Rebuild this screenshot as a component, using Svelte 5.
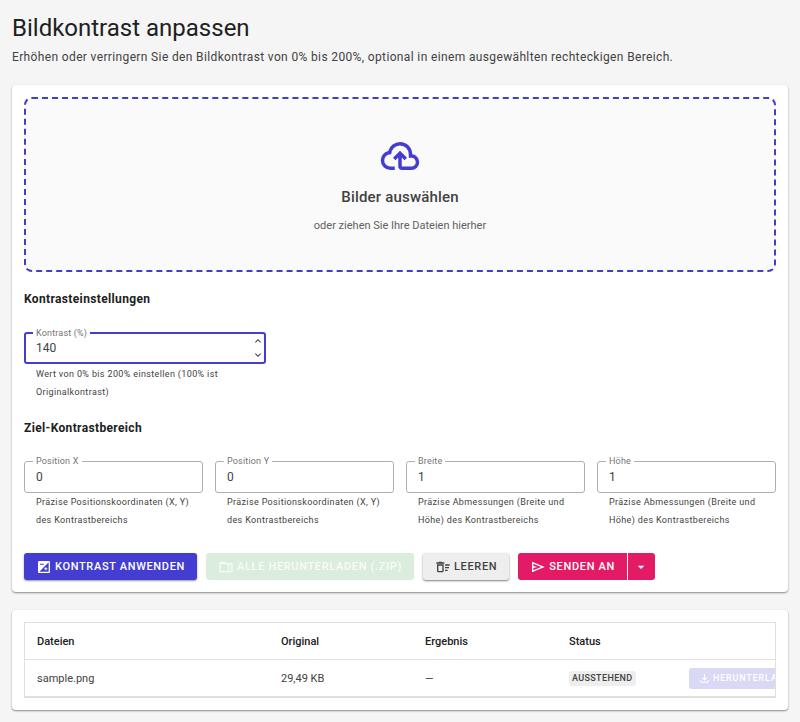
<script lang="ts">
  let contrast = $state(140);

  let area = $state([
    { id: 'pos-x', label: 'Position X', value: 0, hint: 'Präzise Positionskoordinaten (X, Y) des Kontrastbereichs' },
    { id: 'pos-y', label: 'Position Y', value: 0, hint: 'Präzise Positionskoordinaten (X, Y) des Kontrastbereichs' },
    { id: 'width', label: 'Breite', value: 1, hint: 'Präzise Abmessungen (Breite und Höhe) des Kontrastbereichs' },
    { id: 'height', label: 'Höhe', value: 1, hint: 'Präzise Abmessungen (Breite und Höhe) des Kontrastbereichs' }
  ]);

  let files = $state([
    { name: 'sample.png', size: '29,49 KB', result: '—', status: 'Ausstehend' }
  ]);

  const icons = {
    cloud: 'M6.5 20Q4.22 20 2.61 18.43 1 16.85 1 14.58 1 12.63 2.17 11.1 3.35 9.57 5.25 9.15 5.88 6.85 7.75 5.43 9.63 4 12 4 14.93 4 16.96 6.04 19 8.07 19 11 20.73 11.2 21.86 12.5 23 13.78 23 15.5 23 17.38 21.69 18.69 20.38 20 18.5 20H13Q12.18 20 11.59 19.41 11 18.83 11 18V12.85L9.4 14.4L8 13L12 9L16 13L14.6 14.4L13 12.85V18H18.5Q19.55 18 20.27 17.27 21 16.55 21 15.5 21 14.45 20.27 13.73 19.55 13 18.5 13H17V11Q17 8.93 15.54 7.46 14.08 6 12 6 9.93 6 8.46 7.46 7 8.93 7 11H6.5Q5.05 11 4.03 12.03 3 13.05 3 14.5 3 15.95 4.03 17 5.05 18 6.5 18H9V20Z',
    contrast: 'M17 15.5H15.5V17H14V15.5H12.5V14H14V12.5H15.5V14H17V15.5ZM19 19H5L19 5V19ZM6 7H11.5V8.5H6V7ZM19 3H5A2 2 0 0 0 3 5V19A2 2 0 0 0 5 21H19A2 2 0 0 0 21 19V5A2 2 0 0 0 19 3Z',
    zip: 'M20 6H12L10 4H4A2 2 0 0 0 2 6V18A2 2 0 0 0 4 20H20A2 2 0 0 0 22 18V8A2 2 0 0 0 20 6M20 18H16V16H14V18H4V8H14V10H16V8H20V18M16 12V10H18V12H16M14 12H16V14H14V12M18 16H16V14H18V16Z',
    clear: 'M15 16H19V18H15V16M15 8H22V10H15V8M15 12H21V14H15V12M11 10V18H5V10H11M13 8H3V18A2 2 0 0 0 5 20H11A2 2 0 0 0 13 18V8M14 5H11L10 4H6L5 5H2V7H14V5Z',
    send: 'M3 20V4L22 12M5 17L16.85 12L5 7V10.5L11 12L5 13.5Z',
    caret: 'M7 10L12 15L17 10H7Z',
    up: 'M7.41 15.41L12 10.83L16.59 15.41L18 14L12 8L6 14L7.41 15.41Z',
    down: 'M7.41 8.58L12 13.17L16.59 8.58L18 10L12 16L6 10L7.41 8.58Z',
    download: 'M18 15V18H6V15H4V18C4 19.1 4.9 20 6 20H18C19.1 20 20 19.1 20 18V15H18ZM17 11L15.59 9.59L13 12.17V4H11V12.17L8.41 9.59L7 11L12 16L17 11Z'
  };
</script>

{#snippet icon(name: keyof typeof icons)}
  <svg class="icon" viewBox="0 0 24 24" aria-hidden="true"><path fill-rule="evenodd" d={icons[name]} /></svg>
{/snippet}

<main>
  <h1>Bildkontrast anpassen</h1>
  <p class="intro">
    Erhöhen oder verringern Sie den Bildkontrast von 0% bis 200%, optional in einem ausgewählten rechteckigen Bereich.
  </p>

  <section class="card">
    <button class="dropzone">
      {@render icon('cloud')}
      <span class="pick">Bilder auswählen</span>
      <span class="drag">oder ziehen Sie Ihre Dateien hierher</span>
    </button>

    <h2>Kontrasteinstellungen</h2>
    <div class="settings">
      <div class="field active">
        <div class="outline">
          <label for="contrast">Kontrast (%)</label>
          <input id="contrast" type="number" min="0" max="200" bind:value={contrast} aria-describedby="contrast-hint" />
          <div class="spin">
            <button aria-label="Erhöhen" onclick={() => (contrast = Math.min(200, contrast + 1))}>{@render icon('up')}</button>
            <button aria-label="Verringern" onclick={() => (contrast = Math.max(0, contrast - 1))}>{@render icon('down')}</button>
          </div>
        </div>
        <p class="hint" id="contrast-hint">Wert von 0% bis 200% einstellen (100% ist Originalkontrast)</p>
      </div>
    </div>

    <h2>Ziel-Kontrastbereich</h2>
    <div class="area">
      {#each area as f (f.id)}
        <div class="field">
          <div class="outline">
            <label for={f.id}>{f.label}</label>
            <input id={f.id} type="number" bind:value={f.value} aria-describedby="{f.id}-hint" />
          </div>
          <p class="hint" id="{f.id}-hint">{f.hint}</p>
        </div>
      {/each}
    </div>

    <div class="actions">
      <button class="btn primary">{@render icon('contrast')}Kontrast anwenden</button>
      <button class="btn success" disabled>{@render icon('zip')}Alle herunterladen (.zip)</button>
      <button class="btn neutral" onclick={() => (files = [])}>{@render icon('clear')}Leeren</button>
      <div class="split">
        <button class="btn pink">{@render icon('send')}Senden an</button>
        <button class="btn pink more" aria-label="Weitere Ziele">{@render icon('caret')}</button>
      </div>
    </div>
  </section>

  <section class="card list">
    <div class="table-wrap">
      <table>
        <thead>
          <tr>
            <th class="name">Dateien</th>
            <th class="size">Original</th>
            <th class="size">Ergebnis</th>
            <th class="status">Status</th>
            <th></th>
          </tr>
        </thead>
        <tbody>
          {#each files as file}
            <tr>
              <td>{file.name}</td>
              <td>{file.size}</td>
              <td>{file.result}</td>
              <td><span class="chip">{file.status}</span></td>
              <td><button class="btn small" disabled>{@render icon('download')}Herunterladen</button></td>
            </tr>
          {/each}
        </tbody>
      </table>
    </div>
  </section>
</main>

<style>
  :global(body) {
    background: #f5f5f5;
  }

  main {
    padding: 12px;
    font-family: Roboto, 'Liberation Sans', sans-serif;
    color: #424242;
  }

  h1, h2, p {
    margin: 0;
  }

  h1 {
    font-size: 24px;
    font-weight: 400;
    line-height: 32px;
    color: #212121;
  }

  .intro {
    margin-top: 4px;
    font-size: 12px;
    line-height: 18px;
    letter-spacing: 0.03em;
  }

  .card {
    margin-top: 19px;
    padding: 12px;
    background: #fff;
    border-radius: 4px;
    box-shadow: 0 1px 2px rgba(0, 0, 0, 0.45);
  }

  .list {
    margin-top: 18px;
  }

  button, input {
    font-family: inherit;
    color: inherit;
  }

  button {
    cursor: pointer;
  }

  button:disabled {
    cursor: default;
  }

  .icon {
    display: block;
    flex: none;
    fill: currentColor;
  }

  .dropzone {
    display: flex;
    flex-direction: column;
    align-items: center;
    width: 100%;
    padding: 36px 12px 34px;
    border: 2px dashed #433dcb;
    border-radius: 8px;
    background: #fafafa;
  }

  .dropzone .icon {
    width: 42px;
    height: 42px;
    color: #433dd1;
  }

  .pick {
    margin-top: 8px;
    font-size: 15px;
    font-weight: 500;
    line-height: 24px;
    letter-spacing: 0.0125em;
  }

  .drag {
    margin-top: 7px;
    font-size: 11px;
    line-height: 20px;
    color: #616161;
  }

  h2 {
    margin-top: 18px;
    font-size: 12px;
    font-weight: 700;
    line-height: 18px;
    color: #212121;
    letter-spacing: 0.03em;
  }

  .area, .settings {
    display: grid;
    grid-template-columns: repeat(4, minmax(0, 1fr));
    gap: 12px;
    margin-top: 24px;
  }

  .settings {
    grid-template-columns: repeat(3, minmax(0, 1fr));
    gap: 13px;
  }

  .outline {
    position: relative;
    display: flex;
    box-sizing: border-box;
    height: 32px;
    border: 1px solid #b0b0b0;
    border-radius: 3px;
  }

  .active .outline {
    border: 2px solid #433dd1;
  }

  .outline label {
    position: absolute;
    top: -7px;
    left: 8px;
    padding: 0 3px;
    background: #fff;
    font-size: 9px;
    line-height: 12px;
    letter-spacing: 0.02em;
    color: #757575;
  }

  .active label {
    left: 7px;
  }

  .outline input {
    flex: 1;
    min-width: 0;
    padding: 0 11px;
    border: 0;
    outline: 0;
    background: none;
    font-size: 12px;
    appearance: textfield;
  }

  .active input {
    padding: 0 10px;
  }

  .outline input::-webkit-inner-spin-button {
    display: none;
  }

  .spin {
    display: flex;
    flex-direction: column;
    justify-content: space-around;
  }

  .spin button {
    padding: 0;
    border: 0;
    background: none;
  }

  .spin .icon {
    width: 12px;
    height: 12px;
  }

  .hint {
    padding: 0 12px;
    font-size: 9px;
    line-height: 18px;
    letter-spacing: 0.04em;
  }

  .active .hint {
    padding-top: 1px;
  }

  .actions {
    display: flex;
    flex-wrap: wrap;
    gap: 9px;
    margin-top: 24px;
  }

  .btn {
    display: flex;
    align-items: center;
    justify-content: center;
    gap: 3px;
    height: 27px;
    padding: 0 12px;
    border: 0;
    border-radius: 3px;
    font-size: 11px;
    font-weight: 500;
    letter-spacing: 0.06em;
    text-transform: uppercase;
    white-space: nowrap;
    color: #fff;
  }

  .btn .icon {
    width: 16px;
    height: 16px;
  }

  .primary {
    background: #433dd1;
    box-shadow: 0 1px 2px rgba(0, 0, 0, 0.4);
  }

  .success {
    background: #dbeddc;
    color: #f8fcf8;
  }

  .neutral {
    background: #eee;
    color: #424242;
    box-shadow: 0 1px 2px rgba(0, 0, 0, 0.5);
  }

  .split {
    display: flex;
    gap: 1px;
  }

  .pink {
    background: #e31b67;
    border-radius: 3px 0 0 3px;
  }

  .more {
    width: 27px;
    padding: 0;
    border-radius: 0 3px 3px 0;
  }

  .table-wrap {
    overflow-x: auto;
    scrollbar-width: none;
    border: 1px solid #e0e0e0;
    border-bottom-width: 2px;
  }

  table {
    min-width: 100%;
    border-collapse: collapse;
    font-size: 11px;
    text-align: left;
  }

  th, td {
    height: 36px;
    padding: 0 12px;
    white-space: nowrap;
  }

  th {
    font-weight: 500;
    color: #212121;
    border-bottom: 1px solid #e0e0e0;
  }

  .name {
    min-width: 220px;
  }

  .size {
    min-width: 120px;
  }

  .status {
    min-width: 96px;
  }

  .chip {
    display: inline-block;
    padding: 0 3px;
    border-radius: 3px;
    background: #eee;
    font-size: 9px;
    font-weight: 500;
    line-height: 15px;
    text-transform: uppercase;
    letter-spacing: 0.04em;
  }

  .small {
    gap: 2px;
    height: 21px;
    padding: 0 9px;
    font-size: 9px;
    letter-spacing: 0.09em;
    background: #d9d8f5;
  }

  .small .icon {
    width: 13px;
    height: 13px;
  }
</style>
